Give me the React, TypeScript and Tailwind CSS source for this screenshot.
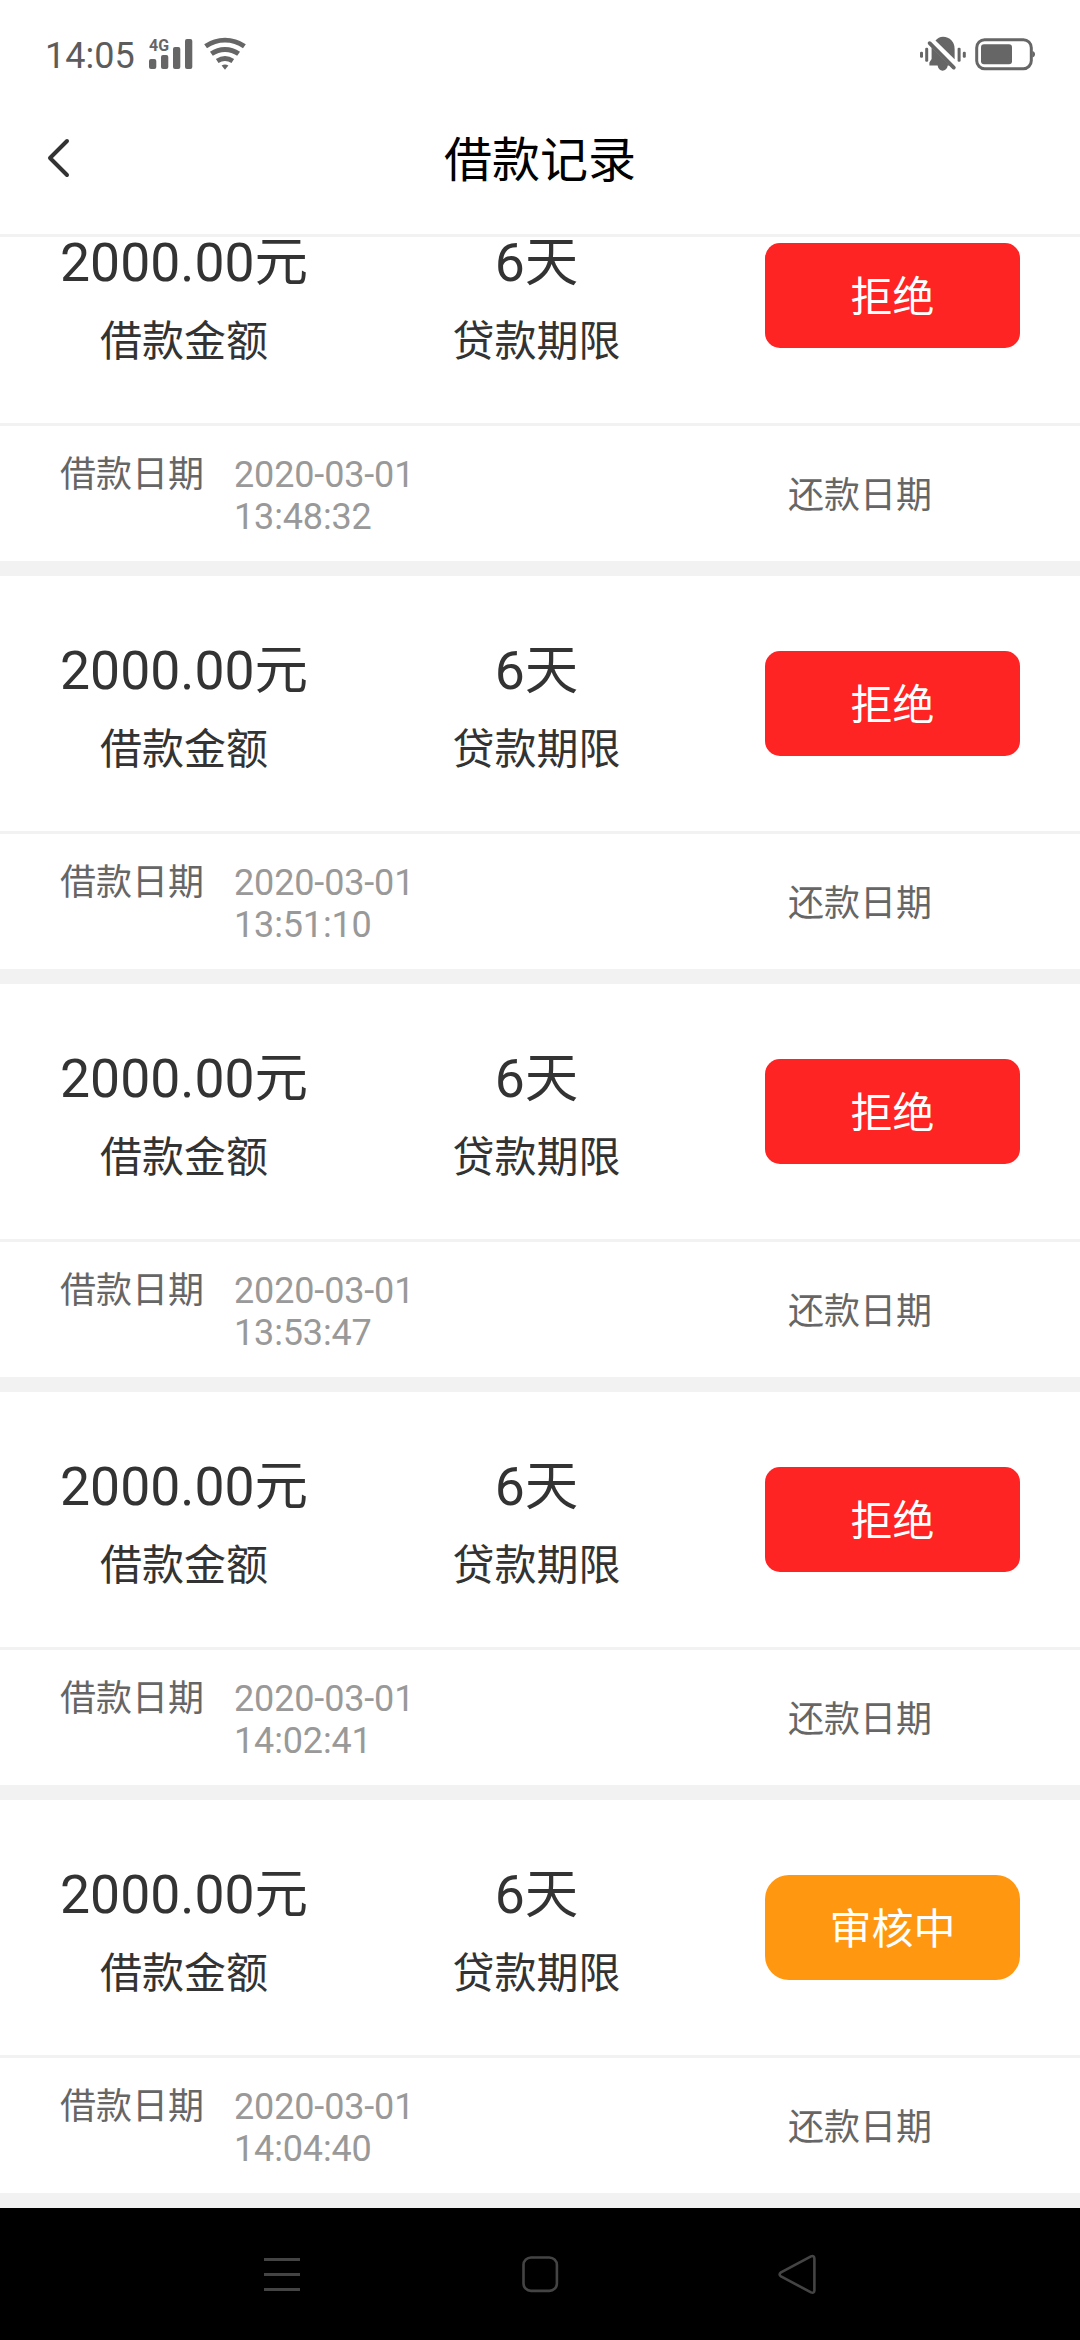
import React from 'react';

type Status = 'rejected' | 'reviewing';

interface LoanRecord {
  id: number;
  amount: string;
  term: string;
  status: Status;
  date: string;
  time: string;
}

const records: LoanRecord[] = [
  { id: 1, amount: '2000.00元', term: '6天', status: 'rejected', date: '2020-03-01', time: '13:48:32' },
  { id: 2, amount: '2000.00元', term: '6天', status: 'rejected', date: '2020-03-01', time: '13:51:10' },
  { id: 3, amount: '2000.00元', term: '6天', status: 'rejected', date: '2020-03-01', time: '13:53:47' },
  { id: 4, amount: '2000.00元', term: '6天', status: 'rejected', date: '2020-03-01', time: '14:02:41' },
  { id: 5, amount: '2000.00元', term: '6天', status: 'reviewing', date: '2020-03-01', time: '14:04:40' },
];

const statusLabels: Record<Status, string> = {
  rejected: '拒绝',
  reviewing: '审核中',
};

const statusStyles: Record<Status, string> = {
  rejected: 'rounded-[15px] bg-[#ff2424]',
  reviewing: 'rounded-[24px] bg-[#ff9710]',
};

const SignalIcon: React.FC = () => (
  <svg width="44" height="36" viewBox="0 0 44 36" fill="currentColor">
    <text x="0" y="17" fontSize="17" fontWeight="700" textLength="20" lengthAdjust="spacingAndGlyphs">
      4G
    </text>
    <rect y="25" width="7.3" height="10" rx="2" />
    <rect x="12" y="21" width="7.3" height="14" rx="2" />
    <rect x="24" y="13" width="7.3" height="22" rx="2" />
    <rect x="36" y="5" width="7.3" height="30" rx="2" />
  </svg>
);

const WifiIcon: React.FC = () => (
  <svg width="44" height="36" viewBox="0 0 44 36" fill="none" stroke="currentColor" strokeWidth="4.9">
    <path d="M2.6 12.2a34 34 0 0 1 38.8 0" />
    <path d="M8.4 19.8a23.5 23.5 0 0 1 27.2 0" />
    <path d="M14.2 27a14.5 14.5 0 0 1 15.6 0" />
    <path d="M18.6 31.4q3.4-1.8 6.8 0L22 35.8z" fill="currentColor" stroke="none" />
  </svg>
);

const MuteIcon: React.FC = () => (
  <svg width="60" height="46" viewBox="0 0 60 46" fill="currentColor">
    <rect x="5" y="21.8" width="3" height="6" rx="1.2" />
    <rect x="10.2" y="17.8" width="3" height="14" rx="1.2" />
    <rect x="42.6" y="17.8" width="3" height="14" rx="1.2" />
    <rect x="47.8" y="21.8" width="3" height="6" rx="1.2" />
    <path d="M20.5 10.6C22.4 8.2 25 6.8 28 6.8c6.8 0 11.6 5.2 11.6 12v10.4z" />
    <path d="M16.6 17.6 34.6 35.6h-1.8c-.6 3.2-2.6 5.2-5.2 5.2s-4.4-2-5-5.2h-8.2v-3.2l2.2-3.4z" />
    <path d="m14.6 13.2 24.2 24.4" stroke="currentColor" strokeWidth="3.8" strokeLinecap="round" />
  </svg>
);

const BatteryIcon: React.FC = () => (
  <svg width="61" height="34" viewBox="0 0 61 34" fill="currentColor">
    <rect x="1.7" y="2.7" width="54.6" height="29" rx="8" fill="none" stroke="currentColor" strokeWidth="3" />
    <rect x="6" y="7.3" width="31" height="20" rx="3" />
    <path d="M57.4 14c1.8.4 2.6 1.6 2.6 3.2s-.8 2.8-2.6 3.2z" />
  </svg>
);

const StatusBar: React.FC = () => (
  <div className="flex h-[108px] shrink-0 items-start justify-between pl-[45px] pr-[44px] text-[#666]">
    <div className="flex items-start pt-[34px]">
      <span className="mt-px w-[104px] text-[36px] leading-[42px] text-[#5c5c5c]">14:05</span>
      <SignalIcon />
      <div className="ml-[10px]">
        <WifiIcon />
      </div>
    </div>
    <div className="flex items-start pt-[30px]">
      <MuteIcon />
      <div className="mt-[7px]">
        <BatteryIcon />
      </div>
    </div>
  </div>
);

const Header: React.FC = () => (
  <header className="flex h-[129px] shrink-0 items-start border-b-[3px] border-[#f2f2f2] px-[47px]">
    <button type="button" className="mt-[30px] w-[24px]">
      <svg width="24" height="40" viewBox="0 0 24 40" fill="none" stroke="#333" strokeWidth="4" strokeLinecap="round" strokeLinejoin="round">
        <path d="M20 3 3 20l17 17" />
      </svg>
    </button>
    <h1 className="mr-[24px] mt-[17px] flex-1 text-center text-[48px] leading-[72px] text-black">借款记录</h1>
  </header>
);

const RecordCard: React.FC<{ record: LoanRecord }> = ({ record }) => (
  <div className="shrink-0 border-b-[15px] border-[#f2f2f2] bg-white">
    <div className="flex h-[258px] items-start justify-between border-b-[3px] border-[#f2f2f2] px-[60px] pt-[62px] text-[#333]">
      <div className="flex flex-col items-center">
        <span className="text-[53.5px] leading-[66px]">{record.amount}</span>
        <span className="mt-[19px] text-[42px] leading-[54px]">借款金额</span>
      </div>
      <div className="flex flex-col items-center">
        <span className="text-[53.5px] leading-[66px]">{record.term}</span>
        <span className="mt-[19px] text-[42px] leading-[54px]">贷款期限</span>
      </div>
      <div
        className={`mt-[13px] flex h-[105px] w-[255px] items-center justify-center pt-[4px] text-[42px] leading-[54px] text-white ${statusStyles[record.status]}`}
      >
        {statusLabels[record.status]}
      </div>
    </div>
    <div className="flex h-[135px] items-center px-[60px] pt-[4px] text-[36px] leading-[42px] text-[#666]">
      <div className="flex w-[728px] items-start">
        <span>借款日期</span>
        <span className="ml-[30px] tracking-[-0.15px] text-[#999]">
          {record.date}
          <br />
          {record.time}
        </span>
      </div>
      <span>还款日期</span>
    </div>
  </div>
);

const NavBar: React.FC = () => (
  <nav className="flex h-[132px] shrink-0 items-center justify-between bg-black px-[258px] text-[#444]">
    <svg width="48" height="48" viewBox="0 0 48 48" fill="none" stroke="currentColor" strokeWidth="3">
      <path d="M6 9.5h36M6 24.5h36M6 39.5h36" />
    </svg>
    <svg width="48" height="48" viewBox="0 0 48 48" fill="none" stroke="currentColor" strokeWidth="2.6">
      <rect x="7.5" y="7.5" width="33.4" height="33.4" rx="7.5" />
    </svg>
    <svg width="48" height="48" viewBox="0 0 48 48" fill="none" stroke="currentColor" strokeWidth="2.6" strokeLinejoin="round">
      <path d="M37 6.4 7 22.4q-2.8 2 0 4L37 42.4q3.2 1.2 3.4-2V8.6q-.2-3.4-3.4-2.2z" />
    </svg>
  </nav>
);

export default function App() {
  return (
    <div className="flex h-[2340px] w-[1080px] flex-col overflow-hidden bg-white font-[Roboto,'Noto_Sans_CJK_SC',sans-serif]">
      <StatusBar />
      <Header />
      {/* list is scrolled, the first card sits partly under the header */}
      <main className="flex h-[1971px] shrink-0 flex-col justify-end overflow-hidden">
        {records.map((record) => (
          <RecordCard key={record.id} record={record} />
        ))}
      </main>
      <NavBar />
    </div>
  );
}
